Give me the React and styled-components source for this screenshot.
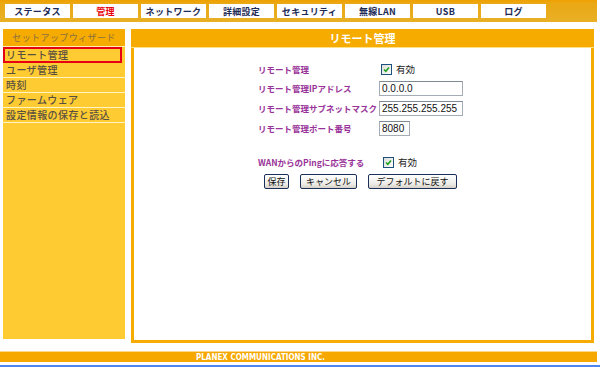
import styled, { createGlobalStyle } from "styled-components";

const GlobalStyle = createGlobalStyle`
  html, body {
    margin: 0;
    padding: 0;
    background: #ffffff;
  }
  body {
    font-family: "Noto Sans CJK JP", "Liberation Sans", sans-serif;
    font-size: 10px;
  }
`;

const Page = styled.div`
  width: 600px;
  height: 367px;
  position: relative;
  overflow: hidden;
  background: #fff;
`;

const TopBar = styled.div`
  width: 597px;
  height: 22px;
  background: linear-gradient(#f0a000 0px, #eaa814 3px, #e9b026 22px);
  display: flex;
  align-items: center;
  gap: 3px;
  padding-left: 5px;
  box-sizing: border-box;
`;

const Tab = styled.div`
  width: 65px;
  height: 14px;
  background: #fff;
  display: flex;
  align-items: center;
  justify-content: center;
  font-size: 9px;
  font-weight: 700;
  line-height: 1;
  color: ${(p) => (p.$active ? "#e8000b" : "#1c2a55")};
  letter-spacing: 0.3px;
`;

const Body = styled.div`
  display: flex;
  align-items: flex-start;
  gap: 6px;
  padding: 7px 0 0 3px;
`;

const Sidebar = styled.div`
  width: 122px;
  height: 310px;
  background: #ffcb33;
  display: flex;
  flex-direction: column;
`;

const SideHead = styled.div`
  height: 18px;
  box-sizing: border-box;
  background: #f6ab00;
  color: #8a7040;
  font-size: 9px;
  letter-spacing: 0.4px;
  display: flex;
  align-items: center;
  justify-content: center;
  border-bottom: 1px solid #fff0b0;
`;

const SideItem = styled.div`
  height: ${(p) => (p.$selected ? "16px" : "15px")};
  box-sizing: border-box;
  overflow: hidden;
  padding-left: ${(p) => (p.$selected ? "1px" : "3px")};
  border: ${(p) => (p.$selected ? "2px solid #e60012" : "none")};
  border-bottom: ${(p) =>
    p.$selected ? "2px solid #e60012" : "1px solid #fff3c4"};
  margin-right: ${(p) => (p.$selected ? "3px" : "0")};
  color: #5a5040;
  font-size: 10px;
  font-weight: 500;
  letter-spacing: 0.4px;
  line-height: 12px;
  display: flex;
  align-items: center;
  white-space: nowrap;
`;

const Panel = styled.div`
  width: 463px;
  height: 314px;
  box-sizing: border-box;
  border: 3px solid #f6ab00;
  border-top: none;
  background: #fff;
  display: flex;
  flex-direction: column;
`;

const PanelTitle = styled.div`
  height: 18px;
  margin: 0 -3px;
  background: #f6ab00;
  color: #fff;
  font-size: 11px;
  font-weight: 600;
  display: flex;
  align-items: center;
  justify-content: center;
  border-bottom: 1px solid #fde08a;
`;

const Form = styled.div`
  padding: 12px 0 0 124px;
  display: grid;
  grid-template-columns: 121px auto;
  grid-template-rows: 18px 20px 20px 20px 14px 20px;
  align-items: center;
`;

const Label = styled.div`
  color: #993399;
  font-size: 8.5px;
  font-weight: 700;
  white-space: nowrap;
`;

const Field = styled.div`
  display: flex;
  align-items: center;
  gap: 4px;
  padding-left: ${(p) => p.$indent || 0}px;
  font-size: 9.5px;
  color: #222;
`;

const Box = styled.span`
  width: 9px;
  height: 9px;
  border: 1px solid #1c5180;
  background: linear-gradient(135deg, #dcdcd7, #fff);
  display: inline-flex;
  align-items: center;
  justify-content: center;
`;

const TextInput = styled.div`
  width: ${(p) => p.$w}px;
  height: 15px;
  box-sizing: border-box;
  border: 1px solid #a5acb5;
  border-top-color: #7f8a99;
  font-family: "Liberation Sans", Arial, sans-serif;
  font-size: 10px;
  padding-left: 2px;
  display: flex;
  align-items: center;
  color: #111;
`;

const Spacer = styled.div`
  grid-column: 1 / 3;
`;

const Buttons = styled.div`
  display: flex;
  gap: 11px;
  padding: 2px 0 0 130px;
`;

const Button = styled.div`
  width: ${(p) => p.$w}px;
  height: 15px;
  box-sizing: border-box;
  border: 1px solid #1a2f5a;
  border-radius: 2px;
  background: linear-gradient(#ffffff, #ecebe6 70%, #d6d0c5);
  font-size: 9px;
  color: #111;
  display: flex;
  align-items: center;
  justify-content: center;
`;

const Footer = styled.div`
  margin-top: 8px;
  height: 11px;
  box-sizing: border-box;
  background: #f6a800;
  border-top: 1px solid #fcd88a;
  width: 597px;
  padding-right: 76px;
  color: #fff;
  font-family: "DejaVu Sans Condensed", "Liberation Sans", sans-serif;
  font-size: 8px;
  font-weight: 700;
  display: flex;
  align-items: center;
  justify-content: center;
`;

const BlueLine = styled.div`
  position: absolute;
  left: 0;
  bottom: 0;
  width: 600px;
  height: 2px;
  background: #4a86f0;
`;

const Check = () => (
  <Box>
    <svg width="7" height="7" viewBox="0 0 7 7">
      <path d="M1 3.5 L2.8 5.3 L6 1.5" stroke="#21a121" strokeWidth="1.6" fill="none" />
    </svg>
  </Box>
);

const tabs = ["ステータス", "管理", "ネットワーク", "詳細設定", "セキュリティ", "無線LAN", "USB", "ログ"];
const menu = ["リモート管理", "ユーザ管理", "時刻", "ファームウェア", "設定情報の保存と読込"];

export default function App() {
  return (
    <Page>
      <GlobalStyle />
      <TopBar>
        {tabs.map((t) => (
          <Tab key={t} $active={t === "管理"}>
            {t}
          </Tab>
        ))}
      </TopBar>
      <Body>
        <Sidebar>
          <SideHead>セットアップウィザード</SideHead>
          {menu.map((m, i) => (
            <SideItem key={m} $selected={i === 0}>
              {m}
            </SideItem>
          ))}
        </Sidebar>
        <Panel>
          <PanelTitle>リモート管理</PanelTitle>
          <Form>
            <Label>リモート管理</Label>
            <Field $indent={2}>
              <Check />
              有効
            </Field>
            <Label>リモート管理IPアドレス</Label>
            <Field>
              <TextInput $w={84}>0.0.0.0</TextInput>
            </Field>
            <Label>リモート管理サブネットマスク</Label>
            <Field>
              <TextInput $w={84}>255.255.255.255</TextInput>
            </Field>
            <Label>リモート管理ポート番号</Label>
            <Field>
              <TextInput $w={31}>8080</TextInput>
            </Field>
            <Spacer />
            <Label>WANからのPingに応答する</Label>
            <Field $indent={4}>
              <Check />
              有効
            </Field>
          </Form>
          <Buttons>
            <Button $w={25}>保存</Button>
            <Button $w={57}>キャンセル</Button>
            <Button $w={89}>デフォルトに戻す</Button>
          </Buttons>
        </Panel>
      </Body>
      <Footer>PLANEX COMMUNICATIONS INC.</Footer>
      <BlueLine />
    </Page>
  );
}
